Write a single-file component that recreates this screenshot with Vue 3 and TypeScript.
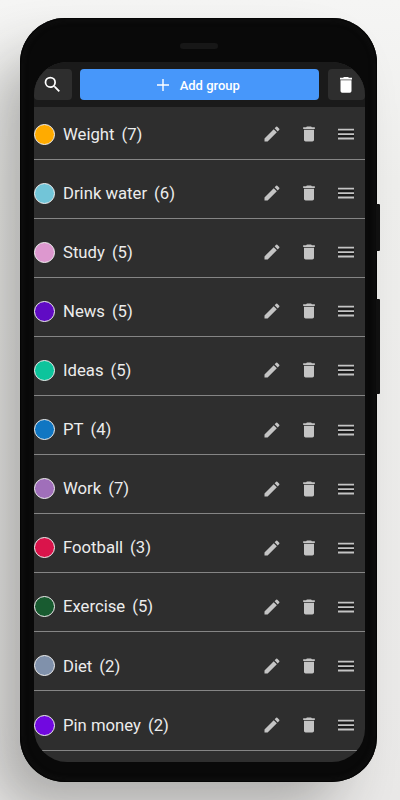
<script setup lang="ts">
interface Group {
  name: string
  count: number
  color: string
}

const groups: Group[] = [
  { name: 'Weight', count: 7, color: '#ffab00' },
  { name: 'Drink water', count: 6, color: '#72c5d8' },
  { name: 'Study', count: 5, color: '#dd98cf' },
  { name: 'News', count: 5, color: '#600bc4' },
  { name: 'Ideas', count: 5, color: '#0dc49c' },
  { name: 'PT', count: 4, color: '#1076c2' },
  { name: 'Work', count: 7, color: '#a06fba' },
  { name: 'Football', count: 3, color: '#da144b' },
  { name: 'Exercise', count: 5, color: '#185b30' },
  { name: 'Diet', count: 2, color: '#8091ab' },
  { name: 'Pin money', count: 2, color: '#7109e0' },
]
</script>

<template>
  <main class="stage">
    <div class="phone">
      <span class="side-key power"></span>
      <span class="side-key volume"></span>
      <span class="speaker"></span>
      <div class="screen">
        <header class="toolbar">
          <button class="tool" aria-label="Search">
            <svg class="search-icon" viewBox="0 0 24 24"><path d="M15.5 14h-.79l-.28-.27A6.47 6.47 0 0 0 16 9.5 6.5 6.5 0 1 0 9.5 16c1.61 0 3.09-.59 4.23-1.57l.27.28v.79l5 4.99L20.49 19l-4.99-5zm-6 0a4.5 4.5 0 1 1 0-9 4.5 4.5 0 0 1 0 9z" /></svg>
          </button>
          <button class="add">
            <svg class="plus-icon" viewBox="0 0 12 12"><path d="M6 0v12M0 6h12" /></svg>
            <span>Add group</span>
          </button>
          <button class="tool" aria-label="Delete">
            <svg class="bin-icon" viewBox="0 0 12 16"><path d="M3.5 0h5v.8H12v1.8H0V.8h3.5zM.5 3.2h11V14q0 1.7-1.7 1.7H2.2Q.5 15.7.5 14z" /><path class="bin-rim" d="M.5 2.5h11" /></svg>
          </button>
        </header>
        <ul class="list">
          <li v-for="group in groups" :key="group.name" class="row">
            <span class="dot" :style="{ backgroundColor: group.color }"></span>
            <span class="name">{{ group.name }}</span>
            <span class="count">({{ group.count }})</span>
            <span class="actions">
              <svg viewBox="0 0 24 24"><path d="M3 17.25V21h3.75L17.81 9.94l-3.75-3.75L3 17.25zM20.71 7.04a1 1 0 0 0 0-1.41l-2.34-2.34a1 1 0 0 0-1.41 0l-1.83 1.83 3.75 3.75 1.83-1.83z" /></svg>
              <svg viewBox="0 0 24 24"><path d="M6 19c0 1.1.9 2 2 2h8c1.1 0 2-.9 2-2V7H6v12zM19 4h-3.5l-1-1h-5l-1 1H5v2h14V4z" /></svg>
              <svg viewBox="0 0 20 20"><path class="handle-gap" d="M2 5h16v10H2z" /><path d="M2 4.8h16v1.8H2zM2 9.2h16V11H2zM2 13.600h16v1.8H2z" /></svg>
            </span>
          </li>
        </ul>
      </div>
    </div>
  </main>
</template>

<style>
body {
  margin: 0;
}
</style>

<style scoped>
.stage {
  box-sizing: border-box;
  width: 400px;
  height: 800px;
  padding: 18px 0 0 20px;
  overflow: hidden;
  font-family: Roboto, "Liberation Sans", sans-serif;
  background: linear-gradient(to bottom, #f5f5f4 0, #eeeeec 180px, #e9e8e7 100%);
}
.phone {
  box-sizing: border-box;
  position: relative;
  width: 356.5px;
  height: 763.5px;
  padding: 44px 11.5px 20px 14px;
  border-radius: 45px;
  background: #090909;
  box-shadow:
    inset 0 0 2px 1px #000,
    inset 0 0 6px 1px #171717,
    -30px 32px 56px -8px rgba(40, 38, 36, 0.33);
}
.side-key {
  position: absolute;
  left: 356px;
  width: 4px;
  background: #101010;
  border-radius: 0 1px 1px 0;
}
.power {
  top: 186px;
  height: 47px;
}
.volume {
  top: 281px;
  height: 95px;
}
.speaker {
  position: absolute;
  top: 25px;
  left: 160px;
  width: 37.5px;
  height: 6px;
  border-radius: 3px;
  background: #171717;
}
.screen {
  height: 700px;
  border-radius: 33px;
  overflow: hidden;
  background: #2e2e2e;
}
.toolbar {
  box-sizing: border-box;
  display: flex;
  gap: 8.5px;
  height: 45px;
  padding: 7px 0;
  background: #1a1a1a;
}
button {
  display: flex;
  align-items: center;
  justify-content: center;
  padding: 0;
  border: 0;
  border-radius: 4px;
  color: #fff;
  font: 500 13px Roboto, "Liberation Sans", sans-serif;
}
.tool {
  width: 37.5px;
  background: #2e2e2e;
}
.add {
  flex: 1;
  gap: 10.5px;
  padding: 1px 2px 0 0;
  background: #4797fa;
}
svg {
  display: block;
  fill: currentColor;
}
.search-icon {
  width: 21px;
  height: 21px;
}
.plus-icon {
  width: 12px;
  height: 12px;
  margin-top: -1px;
  fill: none;
  stroke: currentColor;
  stroke-width: 1.4;
}
.bin-icon {
  width: 12px;
  height: 16px;
}
.bin-rim {
  stroke: #aaa;
  stroke-width: 0.9;
}
.list {
  margin: 0;
  padding: 0;
  list-style: none;
}
.row {
  box-sizing: border-box;
  display: flex;
  align-items: center;
  height: 52.6px;
  margin-bottom: 6.5px;
  padding-top: 2.6px;
  border-bottom: 1px solid #858585;
  color: #ececec;
  font-size: 16.7px;
}
.dot {
  box-sizing: border-box;
  width: 21px;
  height: 21px;
  margin-right: 8px;
  border: 1px solid #f0f0f0;
  border-radius: 50%;
}
.name,
.count {
  padding-top: 0.2px;
}
.count {
  margin-left: 7px;
}
.actions {
  display: flex;
  gap: 17px;
  margin-left: auto;
  padding-right: 9px;
  color: #c4c4c4;
}
.actions svg {
  width: 20px;
  height: 20px;
}
.handle-gap {
  fill: #1b1b1b;
}
</style>
